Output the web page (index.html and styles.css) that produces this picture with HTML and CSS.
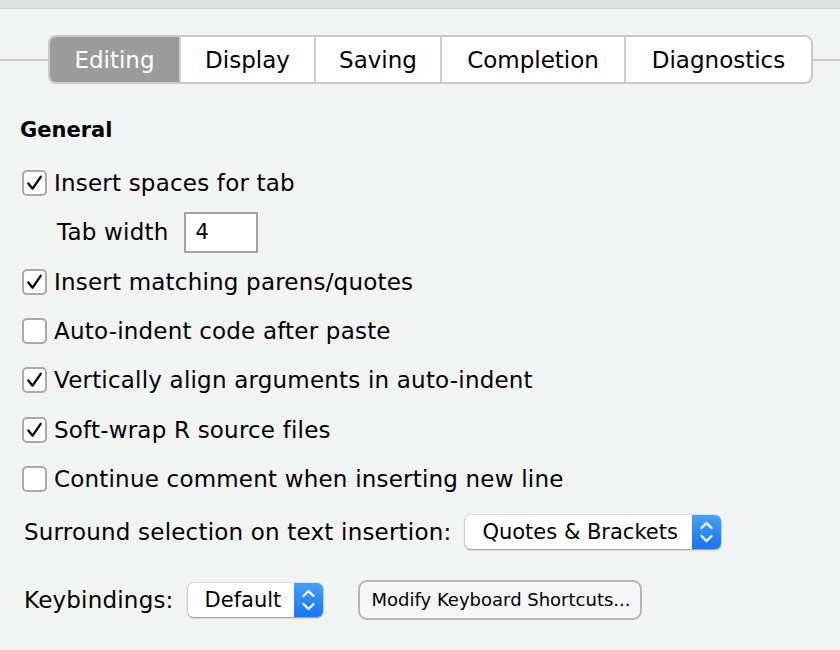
FILE: index.html
```html
<!DOCTYPE html>
<html>
<head>
<meta charset="utf-8">
<link rel="stylesheet" href="styles.css">
</head>
<body>
<div class="titlebar"></div>
<div class="tabbar">
  <div class="rule rule-left"></div>
  <div class="tabs">
    <div class="tab tab-active tab-editing">Editing</div>
    <div class="tab tab-display">Display</div>
    <div class="tab tab-saving">Saving</div>
    <div class="tab tab-completion">Completion</div>
    <div class="tab tab-diagnostics">Diagnostics</div>
  </div>
  <div class="rule rule-right"></div>
</div>
<div class="content">
  <div class="heading">General</div>
  <div class="row"><span class="cb checked"><svg viewBox="0 0 22 22" width="22" height="22"><path d="M4.5 11.5 L9 17 L17.5 4.5" fill="none" stroke="#000" stroke-width="2.4" stroke-linecap="round" stroke-linejoin="round"/></svg></span><span class="label">Insert spaces for tab</span></div>
  <div class="row row-indent"><span class="label">Tab width</span><span class="textbox">4</span></div>
  <div class="row"><span class="cb checked"><svg viewBox="0 0 22 22" width="22" height="22"><path d="M4.5 11.5 L9 17 L17.5 4.5" fill="none" stroke="#000" stroke-width="2.4" stroke-linecap="round" stroke-linejoin="round"/></svg></span><span class="label">Insert matching parens/quotes</span></div>
  <div class="row"><span class="cb"></span><span class="label">Auto-indent code after paste</span></div>
  <div class="row"><span class="cb checked"><svg viewBox="0 0 22 22" width="22" height="22"><path d="M4.5 11.5 L9 17 L17.5 4.5" fill="none" stroke="#000" stroke-width="2.4" stroke-linecap="round" stroke-linejoin="round"/></svg></span><span class="label">Vertically align arguments in auto-indent</span></div>
  <div class="row"><span class="cb checked"><svg viewBox="0 0 22 22" width="22" height="22"><path d="M4.5 11.5 L9 17 L17.5 4.5" fill="none" stroke="#000" stroke-width="2.4" stroke-linecap="round" stroke-linejoin="round"/></svg></span><span class="label">Soft-wrap R source files</span></div>
  <div class="row"><span class="cb"></span><span class="label">Continue comment when inserting new line</span></div>
  <div class="row row-surround">
    <span class="label">Surround selection on text insertion:</span>
    <span class="select select-surround"><span class="select-text">Quotes &amp; Brackets</span><span class="select-arrow"><svg viewBox="0 0 29 34" width="29" height="34"><path d="M9.5 13 L14.5 8 L19.5 13 M9.5 21 L14.5 26 L19.5 21" fill="none" stroke="#fff" stroke-width="2.2" stroke-linecap="round" stroke-linejoin="round"/></svg></span></span>
  </div>
  <div class="row row-keys">
    <span class="label">Keybindings:</span>
    <span class="select select-keys"><span class="select-text">Default</span><span class="select-arrow"><svg viewBox="0 0 29 34" width="29" height="34"><path d="M9.5 13 L14.5 8 L19.5 13 M9.5 21 L14.5 26 L19.5 21" fill="none" stroke="#fff" stroke-width="2.2" stroke-linecap="round" stroke-linejoin="round"/></svg></span></span>
    <span class="button">Modify Keyboard Shortcuts...</span>
  </div>
</div>
</body>
</html>
```
FILE: styles.css
```css
html, body {
  margin: 0;
  padding: 0;
}
body {
  width: 840px;
  height: 650px;
  overflow: hidden;
  background: #f2f3f3;
  font-family: "DejaVu Sans", "Liberation Sans", sans-serif;
  font-size: 21px;
  color: #000;
}
.titlebar {
  height: 8px;
  background: #dfe0e3;
  border-bottom: 1px solid #d2d3d6;
}
.tabbar {
  display: flex;
  align-items: center;
  margin-top: 26px;
}
.rule {
  height: 2px;
  background: #c9c9c9;
}
.rule-left {
  width: 48px;
}
.rule-right {
  flex: 1;
}
.tabs {
  display: flex;
  border: 2px solid #c8c8c8;
  border-radius: 8px;
  overflow: hidden;
  height: 45px;
  background: #fff;
}
.tab {
  display: flex;
  align-items: center;
  justify-content: center;
  font-size: 23px;
  border-left: 2px solid #cdcdcd;
  box-sizing: border-box;
}
.tab-active {
  background: #9b9b9b;
  color: #fff;
  border-left: none;
}
.tab-editing { width: 129px; }
.tab-display { width: 135px; }
.tab-saving { width: 126px; }
.tab-completion { width: 184px; }
.tab-diagnostics { width: 187px; }

.content {
  padding: 21px 0 0 20px;
}
.heading {
  height: 50px;
  display: flex;
  align-items: center;
  font-weight: bold;
  font-size: 21px;
  margin-bottom: 3.33px;
}
.row {
  height: 49.33px;
  display: flex;
  align-items: center;
}
.label {
  font-size: 23px;
  letter-spacing: 0.2px;
}
.cb {
  width: 25px;
  height: 26px;
  box-sizing: border-box;
  border: 2px solid #a9a9a9;
  border-radius: 5px;
  background: #fff;
  margin-left: 2px;
  margin-right: 7px;
  display: flex;
  align-items: center;
  justify-content: center;
}
.cb svg {
  display: block;
}
.row-indent {
  padding-left: 37px;
}
.textbox {
  margin-left: 16px;
  width: 74px;
  height: 41px;
  box-sizing: border-box;
  border: 2px solid #a3a3a3;
  background: #fff;
  display: flex;
  align-items: center;
  padding-left: 9px;
}
.row-surround {
  height: 56px;
  padding-left: 4px;
}
.row-keys {
  height: 80px;
  padding-left: 4px;
}
.select {
  display: flex;
  height: 34px;
  background: #fff;
  border-radius: 6px;
  box-shadow: 0 0 0 1px rgba(0, 0, 0, 0.08), 0 1px 2px rgba(0, 0, 0, 0.35);
  overflow: hidden;
}
.select-text {
  flex: 1;
  display: flex;
  align-items: center;
  padding-left: 17px;
}
.select-arrow {
  width: 29px;
  background: linear-gradient(#46a0fd, #1775f3);
}
.select-arrow svg {
  display: block;
}
.select-surround {
  margin-left: 14px;
  width: 256px;
}
.select-keys {
  margin-left: 14px;
  width: 135px;
}
.button {
  margin-left: 35px;
  width: 284px;
  height: 40px;
  box-sizing: border-box;
  border: 2px solid #b6b6b6;
  border-radius: 9px;
  background: #f6f6f8;
  font-size: 18px;
  display: flex;
  align-items: center;
  padding-left: 12px;
}
```
